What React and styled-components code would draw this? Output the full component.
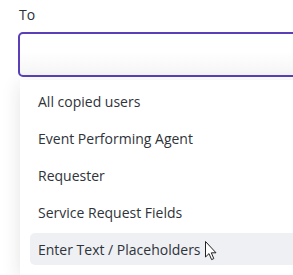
import React from 'react';
import styled, { createGlobalStyle } from 'styled-components';

const GlobalStyle = createGlobalStyle`
  html, body {
    margin: 0;
    padding: 0;
    background: #ffffff;
    overflow: hidden;
  }
  body {
    font-family: "Segoe UI", "Open Sans", "Noto Sans", sans-serif;
  }
`;

const Field = styled.div`
  width: 340px;
  padding: 6px 0 0 18px;
`;

const Label = styled.div`
  font-size: 14px;
  line-height: 18px;
  color: #2b2f36;
  padding-left: 1px;
  margin-bottom: 8px;
`;

const Input = styled.div`
  height: 45px;
  box-sizing: border-box;
  border: 2px solid #5a3fb8;
  border-radius: 5px;
  background: linear-gradient(180deg, #ffffff 40%, #f6f6f7 100%);
`;

const Menu = styled.ul`
  list-style: none;
  margin: 3px 0 0 2px;
  padding: 5px 10px 10px;
  background: #ffffff;
  box-shadow: 0 4px 18px rgba(30, 35, 50, 0.12);
  display: flex;
  flex-direction: column;
  gap: 5px;
`;

const Item = styled.li`
  position: relative;
  height: 32px;
  display: flex;
  align-items: center;
  padding-left: 8px;
  border-radius: 5px;
  font-size: 14px;
  color: #2f333a;
  background: ${p => (p.active ? '#eef0f4' : 'transparent')};
`;

const Pointer = styled.svg`
  position: absolute;
  left: 175px;
  top: 8px;
`;

const items = [
  'All copied users',
  'Event Performing Agent',
  'Requester',
  'Service Request Fields',
  'Enter Text / Placeholders',
];

export default function App() {
  return (
    <>
      <GlobalStyle />
      <Field>
        <Label>To</Label>
        <Input />
        <Menu>
          {items.map((text, i) => (
            <Item key={text} active={i === items.length - 1}>
              {text}
              {i === items.length - 1 && (
                <Pointer width="12" height="20" viewBox="0 0 12 20">
                  <path
                    d="M0.5 0.5 L0.5 16 L4 12.6 L6.6 18.6 L8.8 17.6 L6.3 11.8 L11 11.8 Z"
                    fill="#ffffff"
                    stroke="#222222"
                    strokeWidth="1"
                    strokeLinejoin="round"
                  />
                </Pointer>
              )}
            </Item>
          ))}
        </Menu>
      </Field>
    </>
  );
}
